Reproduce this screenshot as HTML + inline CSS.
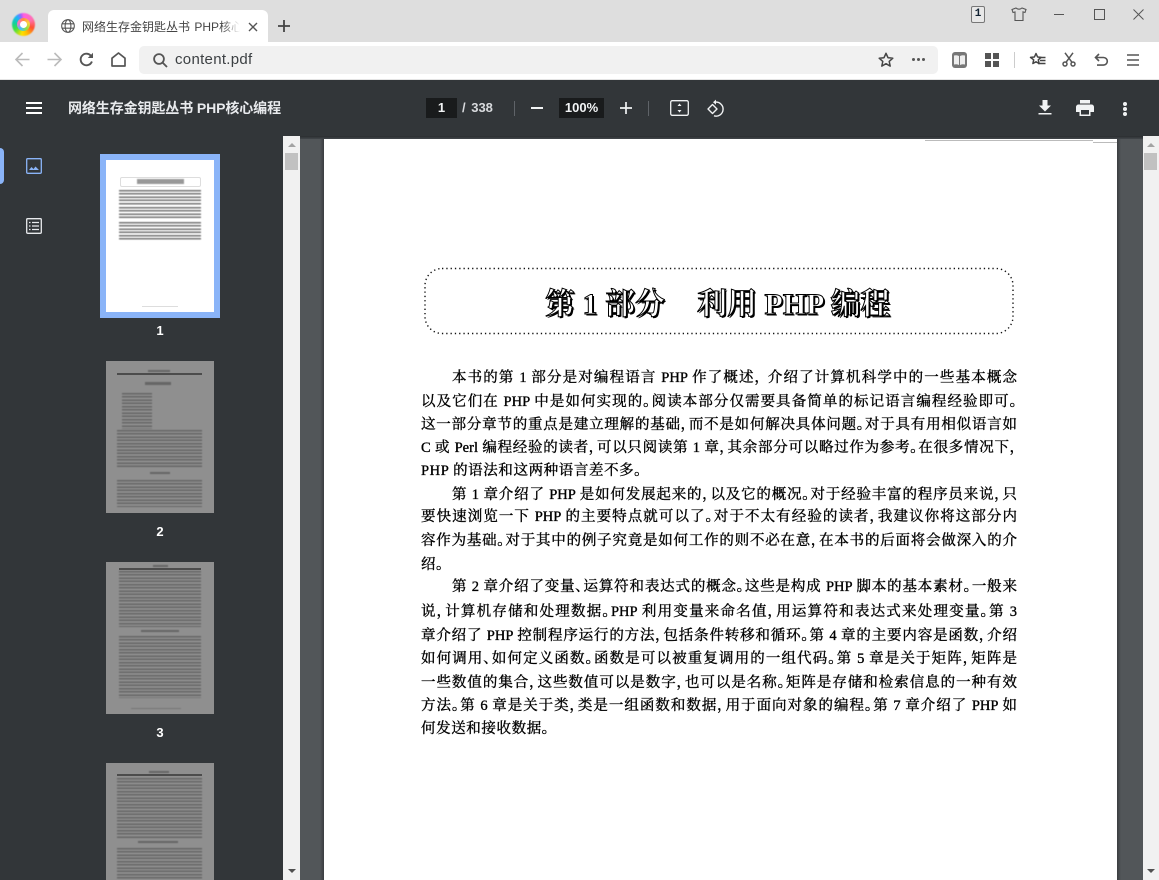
<!DOCTYPE html>
<html><head><meta charset="utf-8"><title>content.pdf</title>
<style>
html,body{margin:0;padding:0;width:1159px;height:880px;overflow:hidden;background:#525659;font-family:"Liberation Sans","Noto Sans CJK SC",sans-serif}
.a{position:absolute}
svg{position:absolute;overflow:visible}
.l{position:absolute;left:421px;width:596px;height:22px;line-height:22px;font-family:"Liberation Serif","Noto Serif CJK SC",serif;font-size:14.5px;font-weight:400;color:#000;text-align:justify;text-align-last:justify;white-space:nowrap;-webkit-text-stroke:.35px #000;font-feature-settings:"palt";margin-top:2px}
.s{text-align-last:left}
.num{position:absolute;left:100px;width:120px;text-align:center;color:#fff;font-size:13px;font-weight:700;line-height:16px;margin-top:1px}
.th{position:absolute;left:106px;width:108px;height:152px;background:#8f8f8f;overflow:hidden}
.tl{position:absolute;background:repeating-linear-gradient(#666 0 1.3px,transparent 1.3px 3.25px);filter:blur(.55px)}
.hd{position:absolute;height:1.5px;background:#4c4c4c;filter:blur(.3px)}
.t{filter:blur(.5px)}
</style></head><body>
<!-- tab strip -->
<div class="a" style="left:0;top:0;width:1159px;height:42px;background:#dedede"></div>
<div class="a" style="left:12px;top:13px;width:23px;height:23px;border-radius:50%;background:conic-gradient(#ff60e0 0deg,#ff70b0 60deg,#ff5030 110deg,#ffc000 160deg,#ffe000 190deg,#40e040 240deg,#10d0a0 280deg,#20b0ff 320deg,#a060ff 345deg,#ff60e0 360deg);filter:blur(.4px)"></div>
<div class="a" style="left:17px;top:18px;width:13px;height:13px;border-radius:50%;background:conic-gradient(#ff9040,#ffd040,#90e040,#40c0ff,#ff70c0,#ff9040)"></div>
<div class="a" style="left:20px;top:21px;width:7px;height:7px;border-radius:50%;background:#fff"></div>
<div class="a" style="left:48px;top:10px;width:220px;height:32px;background:#fff;border-radius:6px 6px 0 0"></div>
<svg style="left:61px;top:19px" width="14" height="14" viewBox="0 0 14 14" fill="none" stroke="#555" stroke-width="1.1"><circle cx="7" cy="7" r="6.3"/><ellipse cx="7" cy="7" rx="2.9" ry="6.3"/><path d="M1 4.800h12M1 9.200h12"/></svg>
<div class="a" style="left:82px;top:17px;width:158px;height:20px;line-height:20px;font-size:12px;color:#444;white-space:nowrap;overflow:hidden;word-spacing:1px;-webkit-mask-image:linear-gradient(90deg,#000 88%,transparent)">网络生存金钥匙丛书 PHP核心编程</div>
<svg style="left:248px;top:22px" width="10" height="10" viewBox="0 0 10 10" stroke="#555" stroke-width="1.4"><path d="M1 1l8 8M9 1l-8 8"/></svg>
<svg style="left:278px;top:20px" width="12" height="12" viewBox="0 0 12 12" stroke="#444" stroke-width="1.8"><path d="M6 0v12M0 6h12"/></svg>
<!-- window controls -->
<div class="a" style="left:971px;top:6px;width:12px;height:15px;border:1px solid #777;border-radius:2px;background:#e8e8e8;font:700 11px/15px 'Liberation Mono',monospace;color:#123;text-align:center">1</div>
<svg style="left:1011px;top:7px" width="16" height="14" viewBox="0 0 16 14" fill="none" stroke="#555" stroke-width="1.1"><path d="M1 2.500L5 1q3 2.400 6 0l4 1.500-1 3-2-.6V13.500H4V5L2 5.500z"/></svg>
<div class="a" style="left:1054px;top:14px;width:10px;height:1px;background:#555"></div>
<div class="a" style="left:1094px;top:9px;width:9px;height:9px;border:1px solid #555"></div>
<svg style="left:1133px;top:9px" width="11" height="11" viewBox="0 0 11 11" stroke="#555" stroke-width="1"><path d="M.5.500l10 10M10.500.500l-10 10"/></svg>
<!-- nav toolbar -->
<div class="a" style="left:0;top:42px;width:1159px;height:37px;background:#fff"></div>
<div class="a" style="left:0;top:79px;width:1159px;height:1px;background:#e4e4e4"></div>
<div class="a" style="left:139px;top:46px;width:799px;height:28px;background:#f1f1f1;border-radius:5px"></div>
<svg style="left:15px;top:52px" width="15" height="15" viewBox="0 0 15 15" fill="none" stroke="#bbb" stroke-width="1.6"><path d="M14.500 7.500H1M7.500 1L1 7.500 7.500 14"/></svg>
<svg style="left:47px;top:52px" width="15" height="15" viewBox="0 0 15 15" fill="none" stroke="#bbb" stroke-width="1.6"><path d="M.5 7.500H14M7.500 1L14 7.500 7.500 14"/></svg>
<svg style="left:79px;top:52px" width="15" height="15" viewBox="0 0 15 15" fill="none" stroke="#555" stroke-width="1.900"><path d="M12.900 9.500A5.800 5.800 0 1 1 11.600 3.400L13.500 5.200"/><path d="M14 .8v5.200H8.800z" fill="#555" stroke="none"/></svg>
<svg style="left:111px;top:52px" width="15" height="15" viewBox="0 0 15 15" fill="none" stroke="#555" stroke-width="1.700"><path d="M1 14V6.200L7.500 1 14 6.200V14z" stroke-linejoin="round"/></svg>
<svg style="left:153px;top:53px" width="15" height="15" viewBox="0 0 15 15" fill="none" stroke="#555" stroke-width="1.800"><circle cx="6" cy="6" r="4.900"/><path d="M9.600 9.600L14 14"/></svg>
<div class="a" style="left:175px;top:50px;height:20px;line-height:20px;font-size:15px;letter-spacing:.3px;color:#3c4043">content.pdf</div>
<svg style="left:878px;top:52px" width="16" height="15" viewBox="0 0 16 15" fill="none" stroke="#444" stroke-width="1.500"><path d="M8 1.300l2 4.400 4.800.5-3.600 3.200 1 4.700L8 11.700l-4.200 2.400 1-4.700L1.200 6.200 6 5.700z" stroke-linejoin="round"/></svg>
<div class="a" style="left:912px;top:58px;width:3px;height:3px;border-radius:50%;background:#555;box-shadow:5px 0 #555,10px 0 #555"></div>
<div class="a" style="left:952px;top:52px;width:15px;height:16px;background:#777;border-radius:3px"></div>
<svg style="left:954px;top:55px" width="11" height="10" viewBox="0 0 11 10" fill="#eee"><path d="M0 .5q3-.8 5 .5v9q-2-1.300-5-.5zM11 .5q-3-.8-5 .5v9q2-1.300 5-.5z"/></svg>
<div class="a" style="left:985px;top:53px;width:6px;height:6px;background:#555;box-shadow:8px 0 #555,0 8px #555,8px 8px #555"></div>
<div class="a" style="left:1014px;top:52px;width:1px;height:16px;background:#ccc"></div>
<svg style="left:1029px;top:52px" width="17" height="15" viewBox="0 0 17 15" fill="none" stroke="#444" stroke-width="1.500"><path d="M7 1.500l1.600 3.500 3.400.4-2.700 2.400.8 3.700L7 9.800l-3.100 1.700.8-3.700L1.500 5.400 5.400 5z" stroke-linejoin="round"/><path d="M10 5.500h6.500M11 8.500h5.500M9 11.500h7.500"/></svg>
<svg style="left:1062px;top:52px" width="14" height="15" viewBox="0 0 14 15" fill="none" stroke="#555" stroke-width="1.500"><circle cx="3" cy="12" r="2"/><circle cx="11" cy="12" r="2"/><path d="M4 10.300L11 .8M10 10.300L3 .8"/></svg>
<svg style="left:1094px;top:53px" width="14" height="14" viewBox="0 0 14 14" fill="none" stroke="#555" stroke-width="1.600"><path d="M2 4.500h7.500a3.800 3.800 0 0 1 0 7.600H3"/><path d="M5 1L1.500 4.500 5 8"/></svg>
<svg style="left:1127px;top:54px" width="12" height="12" viewBox="0 0 12 12" stroke="#555" stroke-width="1.500"><path d="M0 1h12M0 6h12M0 11h12"/></svg>
<!-- pdf toolbar -->
<div class="a" style="left:0;top:80px;width:1159px;height:56px;background:#323639"></div>
<div class="a" style="left:26px;top:102px;width:16px;height:2px;background:#fff;box-shadow:0 5px #fff,0 10px #fff"></div>
<div class="a" style="left:68px;top:99px;height:18px;line-height:18px;font-size:14px;font-weight:700;color:#e8eaed;white-space:nowrap;letter-spacing:-.1px">网络生存金钥匙丛书 PHP核心编程</div>
<div class="a" style="left:426px;top:98px;width:31px;height:20px;background:#191b1c;color:#f1f3f4;font-size:13px;font-weight:700;line-height:20px;text-align:center">1</div>
<div class="a" style="left:462px;top:98px;height:20px;line-height:20px;color:#d8dadd;font-size:13px;font-weight:700;word-spacing:2px">/ 338</div>
<div class="a" style="left:514px;top:101px;width:1px;height:15px;background:#5f6368"></div>
<div class="a" style="left:531px;top:107px;width:12px;height:2px;background:#f1f3f4"></div>
<div class="a" style="left:559px;top:98px;width:45px;height:20px;background:#191b1c;color:#f1f3f4;font-size:13px;font-weight:700;line-height:20px;text-align:center">100%</div>
<svg style="left:620px;top:102px" width="12" height="12" viewBox="0 0 12 12" stroke="#f1f3f4" stroke-width="1.700"><path d="M6 0v12M0 6h12"/></svg>
<div class="a" style="left:648px;top:101px;width:1px;height:15px;background:#5f6368"></div>
<svg style="left:670px;top:100px" width="19" height="16" viewBox="0 0 19 16" fill="none" stroke="#f1f3f4" stroke-width="1.300"><rect x=".7" y=".7" width="17.600" height="14.600" rx="1.500"/><path d="M9.500 3.500l2 2.500h-4zM9.500 12.500l2-2.500h-4z" fill="#f1f3f4" stroke="none"/></svg>
<svg style="left:706px;top:99px" width="18" height="18" viewBox="0 0 18 18" fill="none" stroke="#f1f3f4" stroke-width="1.400"><path d="M9 3.200a7 7 0 1 1-1 13.600"/><path d="M10 .6L7 3.200l3 2.600" fill="#f1f3f4" stroke="none"/><path d="M6.500 5.500L11 10l-4.500 4.500L2 10z" stroke-linejoin="round"/></svg>
<svg style="left:1038px;top:100px" width="14" height="15" viewBox="0 0 14 15" fill="#f1f3f4"><path d="M4.500 0h5v5.500H13L7 11.500 1 5.500h3.500zM.5 13h13v1.500H.5z"/></svg>
<svg style="left:1076px;top:100px" width="18" height="16" viewBox="0 0 18 16" fill="#f1f3f4"><path d="M4 0h10v3.500H4z"/><path fill-rule="evenodd" d="M2.500 4.500h13A2.500 2.500 0 0 1 18 7v5h-3.500v4h-11v-4H0V7a2.500 2.500 0 0 1 2.500-2.500zM5 10v4.500h8V10z"/></svg>
<div class="a" style="left:1123px;top:102px;width:4px;height:4px;border-radius:50%;background:#f1f3f4;box-shadow:0 5px #f1f3f4,0 10px #f1f3f4"></div>
<!-- shadow under toolbar -->
<div class="a" style="left:0;top:136px;width:1159px;height:3px;background:linear-gradient(#2a2d30,#42464a)"></div>
<!-- sidebar -->
<div class="a" style="left:0;top:136px;width:283px;height:744px;background:#323639"></div>
<div class="a" style="left:0;top:148px;width:4px;height:36px;background:#8ab4f8;border-radius:0 4px 4px 0"></div>
<svg style="left:26px;top:158px" width="16" height="16" viewBox="0 0 16 16" fill="none" stroke="#8ab4f8" stroke-width="1.300"><rect x=".7" y=".7" width="14.600" height="14.600" rx="1"/><path d="M3 12l2.500-3 2 2 2-2.500L13 12z" fill="#8ab4f8" stroke="none"/></svg>
<svg style="left:26px;top:218px" width="16" height="16" viewBox="0 0 16 16" fill="none" stroke="#e8eaed" stroke-width="1.300"><rect x=".7" y=".7" width="14.600" height="14.600" rx="1"/><path d="M6 4.500h7M6 8h7M6 11.500h7M3 4.500h1.500M3 8h1.500M3 11.500h1.500"/></svg>
<!-- thumb 1 -->
<div class="a" style="left:100px;top:154px;width:120px;height:164px;background:#8ab4f8"></div>
<div class="th" style="top:160px;background:#fff">
  <div class="a" style="left:14px;top:17px;width:79px;height:8px;border:1px solid #ddd;border-radius:2px"></div>
  <div class="a t" style="left:31px;top:19px;width:47px;height:5px;background:#555;opacity:.6"></div>
  <div class="tl" style="left:13px;top:30px;width:82px;height:16px;opacity:.9"></div>
  <div class="tl" style="left:13px;top:47px;width:82px;height:13px;opacity:.9"></div>
  <div class="tl" style="left:13px;top:62px;width:82px;height:19px;opacity:.9"></div>
  <div class="a" style="left:36px;top:146px;width:36px;height:1px;background:#ddd"></div>
</div>
<div class="num" style="top:322px">1</div>
<!-- thumb 2 -->
<div class="th" style="top:361px">
  <div class="a t" style="left:42px;top:9px;width:22px;height:2px;background:#666"></div>
  <div class="hd" style="left:11px;top:12px;width:85px"></div>
  <div class="a t" style="left:39px;top:21px;width:26px;height:3px;background:#666"></div>
  <div class="tl" style="left:16px;top:32px;width:30px;height:36px"></div>
  <div class="tl" style="left:11px;top:69px;width:85px;height:37px"></div>
  <div class="a t" style="left:44px;top:111px;width:20px;height:2px;background:#666"></div>
  <div class="tl" style="left:11px;top:119px;width:85px;height:27px"></div>
</div>
<div class="num" style="top:523px">2</div>
<!-- thumb 3 -->
<div class="th" style="top:562px">
  <div class="a t" style="left:47px;top:3px;width:15px;height:2px;background:#666"></div>
  <div class="hd" style="left:13px;top:6px;width:82px"></div>
  <div class="tl" style="left:13px;top:9px;width:82px;height:56px"></div>
  <div class="a t" style="left:35px;top:68px;width:38px;height:2px;background:#666"></div>
  <div class="tl" style="left:13px;top:74px;width:82px;height:62px"></div>
  <div class="a t" style="left:25px;top:146px;width:50px;height:1px;background:#777"></div>
</div>
<div class="num" style="top:724px">3</div>
<!-- thumb 4 -->
<div class="th" style="top:763px;height:117px">
  <div class="a t" style="left:43px;top:8px;width:20px;height:2px;background:#666"></div>
  <div class="hd" style="left:11px;top:11px;width:85px"></div>
  <div class="tl" style="left:11px;top:15px;width:85px;height:60px"></div>
  <div class="a t" style="left:32px;top:78px;width:40px;height:2px;background:#666"></div>
  <div class="tl" style="left:11px;top:85px;width:85px;height:32px"></div>
</div>
<!-- sidebar scrollbar -->
<div class="a" style="left:283px;top:136px;width:17px;height:744px;background:#f1f1f1"></div>
<div class="a" style="left:288px;top:143px;border:4px solid transparent;border-bottom:4px solid #a3a3a3;border-top:0;width:0;height:0"></div>
<div class="a" style="left:285px;top:153px;width:13px;height:17px;background:#c1c1c1"></div>
<div class="a" style="left:288px;top:869px;border:4px solid transparent;border-top:4px solid #505050;border-bottom:0;width:0;height:0"></div>
<!-- viewer -->
<div class="a" style="left:300px;top:139px;width:843px;height:741px;background:#525659"></div>
<div class="a" style="left:320px;top:139px;width:4px;height:741px;background:linear-gradient(90deg,#525659,#3a3d40)"></div>
<div class="a" style="left:1117px;top:139px;width:4px;height:741px;background:linear-gradient(90deg,#3a3d40,#525659)"></div>
<div class="a" style="left:324px;top:139px;width:793px;height:741px;background:#fff"></div>
<div class="a" style="left:925px;top:140px;width:168px;height:1px;background:#bbb"></div>
<div class="a" style="left:1093px;top:142px;width:24px;height:1px;background:#bbb"></div>
<!-- title box -->
<svg style="left:420px;top:264px" width="600" height="74" viewBox="0 0 600 74" fill="none"><rect x="5" y="4.500" width="588" height="65" rx="17" stroke="#111" stroke-width="1.400" stroke-dasharray="1.300 3"/></svg>
<div class="a" style="left:545px;top:286px;width:370px;height:38px;line-height:38px;font-family:'Liberation Serif','Noto Serif CJK SC',serif;font-size:30px;font-weight:700;color:#fff;-webkit-text-stroke:1px #000;text-shadow:1.500px 1.500px 0 #000;white-space:pre">第 1 部分<span style="display:inline-block;width:32px"></span>利用 PHP 编程</div>
<!-- body text -->
<div class="l" style="top:365px;left:452px;width:565px">本书的第 1 部分是对编程语言 PHP 作了概述， 介绍了计算机科学中的一些基本概念</div>
<div class="l" style="top:389px">以及它们在 PHP 中是如何实现的。阅读本部分仅需要具备简单的标记语言编程经验即可。</div>
<div class="l" style="top:412px">这一部分章节的重点是建立理解的基础，而不是如何解决具体问题。对于具有用相似语言如</div>
<div class="l" style="top:435px">C 或 Perl 编程经验的读者，可以只阅读第 1 章，其余部分可以略过作为参考。在很多情况下，</div>
<div class="l s" style="top:458px;letter-spacing:.6px">PHP 的语法和这两种语言差不多。</div>
<div class="l" style="top:482px;left:452px;width:565px">第 1 章介绍了 PHP 是如何发展起来的，以及它的概况。对于经验丰富的程序员来说，只</div>
<div class="l" style="top:504px">要快速浏览一下 PHP 的主要特点就可以了。对于不太有经验的读者，我建议你将这部分内</div>
<div class="l" style="top:528px">容作为基础。对于其中的例子究竟是如何工作的则不必在意，在本书的后面将会做深入的介</div>
<div class="l s" style="top:552px;letter-spacing:.6px">绍。</div>
<div class="l" style="top:574px;left:452px;width:565px">第 2 章介绍了变量、运算符和表达式的概念。这些是构成 PHP 脚本的基本素材。一般来</div>
<div class="l" style="top:599px">说，计算机存储和处理数据。PHP 利用变量来命名值，用运算符和表达式来处理变量。第 3</div>
<div class="l" style="top:623px">章介绍了 PHP 控制程序运行的方法，包括条件转移和循环。第 4 章的主要内容是函数，介绍</div>
<div class="l" style="top:646px">如何调用、如何定义函数。函数是可以被重复调用的一组代码。第 5 章是关于矩阵，矩阵是</div>
<div class="l" style="top:670px">一些数值的集合，这些数值可以是数字，也可以是名称。矩阵是存储和检索信息的一种有效</div>
<div class="l" style="top:693px">方法。第 6 章是关于类，类是一组函数和数据，用于面向对象的编程。第 7 章介绍了 PHP 如</div>
<div class="l s" style="top:716px;letter-spacing:.6px">何发送和接收数据。</div>
<!-- main scrollbar -->
<div class="a" style="left:1143px;top:136px;width:16px;height:744px;background:#f1f1f1"></div>
<div class="a" style="left:1147px;top:143px;border:4px solid transparent;border-bottom:4px solid #a3a3a3;border-top:0;width:0;height:0"></div>
<div class="a" style="left:1144px;top:153px;width:13px;height:17px;background:#c1c1c1"></div>
<div class="a" style="left:1147px;top:869px;border:4px solid transparent;border-top:4px solid #505050;border-bottom:0;width:0;height:0"></div>
</body></html>
